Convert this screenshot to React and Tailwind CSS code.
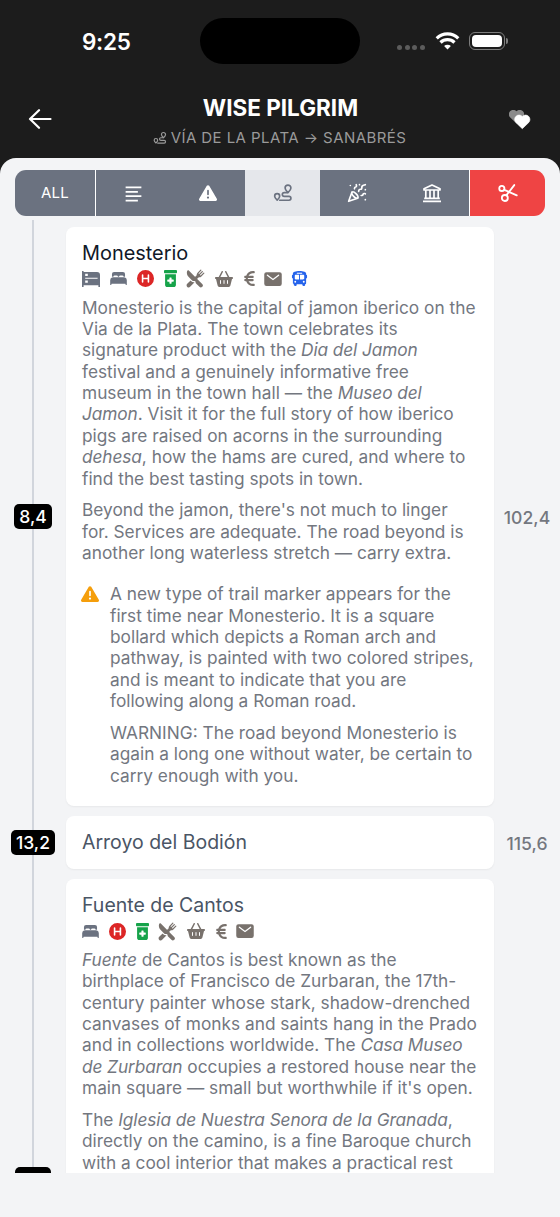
import clsx from "clsx";
import { FaBasketShopping, FaBus, FaCircleH, FaEuroSign, FaPrescriptionBottleMedical, FaTriangleExclamation } from "react-icons/fa6";
import { IoBed, IoMail, IoRestaurant } from "react-icons/io5";
import { LuPartyPopper } from "react-icons/lu";
import { RiAlignLeft } from "react-icons/ri";

/* ================= ICONS ================= */
function BackIcon({ className }) {
  return (
    <svg viewBox="0 0 24 20" className={className} fill="none" stroke="currentColor" strokeWidth="2.200" strokeLinecap="round" strokeLinejoin="round">
      <path d="M11 1.200 2 10l9 8.800M2 10h20.500" />
    </svg>
  );
}

function RouteIcon({ className }) {
  return (
    <svg viewBox="0 0 24 24" className={className} fill="none" stroke="currentColor" strokeWidth="2" strokeLinecap="round" strokeLinejoin="round">
      <path d="M18 11.500c-2-1.800-3.500-3.600-3.500-5.500a3.500 3.500 0 0 1 7 0c0 1.900-1.500 3.700-3.500 5.500z" />
      <path d="M5 20.500c-1.900-1.700-3-3.200-3-4.700a3 3 0 0 1 6 0c0 1.500-1.100 3-3 4.700z" />
      <path d="M17.500 11.500h-4a2.300 2.300 0 0 0 0 4.600h5.700a2.300 2.300 0 0 1 0 4.600H8" />
    </svg>
  );
}

function BankIcon({ className }) {
  return (
    <svg viewBox="0 0 20 20" className={className} fill="none" stroke="currentColor" strokeWidth="1.700" strokeLinejoin="round">
      <path d="M2 7V5.800L10 2l8 3.800V7z" />
      <path d="M3.800 7v8M8 7v8M12 7v8M16.200 7v8M2.200 15.300h15.600M1 18.300h18" />
    </svg>
  );
}

function ScissorsIcon({ className }) {
  return (
    <svg viewBox="0 0 24 24" className={className} fill="none" stroke="currentColor" strokeWidth="2.200" strokeLinecap="round">
      <circle cx="4.600" cy="6.500" r="3.100" />
      <circle cx="8.200" cy="18" r="3.600" />
      <path d="M19.500 2.500 10 14.800M7.500 8.200l15 6.600" />
    </svg>
  );
}

function BunkIcon({ className }) {
  return (
    <svg viewBox="0 0 18 16" className={className} fill="currentColor">
      <path fillRule="evenodd" d="M0 0h1.600v1H15a3 3 0 0 1 3 3v12h-1.600v-1.800H1.600V16H0zM3.200 2.800v2.200h2.600V2.800zM3.200 6.800v1h12.400v-1zM3.200 9.400v2.400h2.600V9.400z" />
    </svg>
  );
}

function WifiIcon({ className }) {
  return (
    <svg viewBox="0 0 24 18" className={className} fill="none" stroke="currentColor" strokeWidth="3.200">
      <path d="M1.200 6.400a15.300 15.300 0 0 1 21.600 0" />
      <path d="M5 10.500a10 10 0 0 1 14 0" />
      <path d="M12 17.500 8.600 14.100a4.800 4.800 0 0 1 6.800 0z" fill="currentColor" stroke="none" />
    </svg>
  );
}

function HeartsIcon({ className }) {
  const heart = "M8 14.500 1.500 8.200A4.300 4.300 0 0 1 8 2.300a4.300 4.300 0 0 1 6.500 5.900z";
  return (
    <svg viewBox="0 0 22 20" className={className}>
      <path d={heart} fill="#8a8a8a" transform="translate(-0.500 -1)" />
      <path d={heart} fill="#fff" stroke="#fff" strokeWidth="0.600" strokeLinejoin="round" transform="translate(5.300 4.200)" />
    </svg>
  );
}

/* ================= DATA ================= */
const SERVICES = {
  bunk: { width: "w-[18px]", icon: <BunkIcon className="h-4 w-[18px] text-[#6b7280]" /> },
  bed: { width: "w-[17px]", icon: <IoBed className="size-[19px] text-[#6b7280]" /> },
  hospital: { width: "w-[17px]", icon: <FaCircleH className="size-[17px] text-[#dc2626]" /> },
  pharmacy: { width: "w-3", icon: <FaPrescriptionBottleMedical className="h-[17px] w-[13px] text-[#16a34a]" preserveAspectRatio="none" /> },
  food: { width: "w-[18px]", icon: <IoRestaurant className="size-[19px] text-[#78716c]" /> },
  shop: { width: "w-5", icon: <FaBasketShopping className="size-[18px] text-[#78716c]" /> },
  atm: { width: "w-[10px]", icon: <FaEuroSign className="h-[17px] w-[11px] text-[#78716c]" /> },
  post: { width: "w-[17px]", icon: <IoMail className="size-5 text-[#78716c]" /> },
  bus: { width: "w-[17px]", icon: <FaBus className="size-[17px] text-[#2563eb]" /> },
};

const stops = [
  {
    name: "Monesterio",
    visited: true,
    step: "8,4",
    total: "102,4",
    services: ["bunk", "bed", "hospital", "pharmacy", "food", "shop", "atm", "post", "bus"],
    paragraphs: [
      [
        "Monesterio is the capital of jamon iberico on the",
        "Via de la Plata. The town celebrates its",
        <>signature product with the <i>Dia del Jamon</i></>,
        "festival and a genuinely informative free",
        <>museum in the town hall — the <i>Museo del</i></>,
        <><i>Jamon</i>. Visit it for the full story of how iberico</>,
        "pigs are raised on acorns in the surrounding",
        <><i>dehesa</i>, how the hams are cured, and where to</>,
        "find the best tasting spots in town.",
      ],
      [
        "Beyond the jamon, there's not much to linger",
        "for. Services are adequate. The road beyond is",
        "another long waterless stretch — carry extra.",
      ],
    ],
    warnings: [
      [
        "A new type of trail marker appears for the",
        "first time near Monesterio. It is a square",
        "bollard which depicts a Roman arch and",
        "pathway, is painted with two colored stripes,",
        "and is meant to indicate that you are",
        "following along a Roman road.",
      ],
      [
        "WARNING: The road beyond Monesterio is",
        "again a long one without water, be certain to",
        "carry enough with you.",
      ],
    ],
  },
  { name: "Arroyo del Bodión", step: "13,2", total: "115,6" },
  {
    name: "Fuente de Cantos",
    step: "7,4",
    tall: true,
    services: ["bed", "hospital", "pharmacy", "food", "shop", "atm", "post"],
    paragraphs: [
      [
        <><i>Fuente</i> de Cantos is best known as the</>,
        "birthplace of Francisco de Zurbaran, the 17th-",
        "century painter whose stark, shadow-drenched",
        "canvases of monks and saints hang in the Prado",
        <>and in collections worldwide. The <i>Casa Museo</i></>,
        <><i>de Zurbaran</i> occupies a restored house near the</>,
        "main square — small but worthwhile if it's open.",
      ],
      [
        <>The <i>Iglesia de Nuestra Senora de la Granada</i>,</>,
        "directly on the camino, is a fine Baroque church",
        "with a cool interior that makes a practical rest",
      ],
    ],
  },
];

/* ================= HEADER ================= */
function StatusBar() {
  return (
    <div className="grid grid-cols-[200px_160px_200px] pt-[18px]">
      <div className="flex items-center pt-[1px] pl-[82px] text-[22.500px] font-semibold tracking-[-0.300px]">9:25</div>
      <div className="h-[46px] rounded-full bg-black" />
      <div className="flex items-center pl-[37px]">
        <div className="mt-[13px] flex gap-[2.700px]">
          {[0, 1, 2, 3].map((i) => (
            <span key={i} className="size-[5px] rounded-full bg-[#5c5c5c]" />
          ))}
        </div>
        <WifiIcon className="ml-[10px] h-[18px] w-[25px]" />
        <div className="ml-[9px] h-[18px] w-9 rounded-[6px] border border-[#7d7d7d] p-[2px]">
          <div className="h-full rounded-[4px] bg-white" />
        </div>
        <span className="ml-[1px] h-[6px] w-[2px] rounded-r-full bg-[#7d7d7d]" />
      </div>
    </div>
  );
}

function Header() {
  return (
    <header className="h-[158px] bg-[#1c1c1c] text-white">
      <StatusBar />
      <div className="flex items-start justify-between pt-[29px] pl-[28px] pr-[29px]">
        <BackIcon className="mt-[15.500px] h-5 w-6" />
        <div className="flex flex-col items-center">
          <h1 className="text-[22.500px] leading-[29px] font-bold">WISE PILGRIM</h1>
          <div className="-ml-[2px] flex items-center gap-1 pt-[2px] text-[15px] leading-7 tracking-[0.430px] text-[#9a9a9a]">
            <RouteIcon className="size-[14px]" />
            VÍA DE LA PLATA → SANABRÉS
          </div>
        </div>
        <HeartsIcon className="mt-[16.500px] h-5 w-[22px]" />
      </div>
    </header>
  );
}

/* ================= FILTERS ================= */
const filters = [
  { id: "all", content: "ALL", className: "w-[80px] bg-[#6b7280]" },
  { id: "text", content: <RiAlignLeft className="size-[21px]" />, className: "flex-1 bg-[#6b7280] border-l border-white" },
  { id: "alerts", content: <FaTriangleExclamation className="size-[18px]" />, className: "flex-1 bg-[#6b7280]" },
  { id: "route", content: <RouteIcon className="size-5" />, className: "flex-1 bg-gray-200 text-[#6b7280]" },
  { id: "events", content: <LuPartyPopper className="size-5" />, className: "flex-1 bg-[#6b7280]" },
  { id: "culture", content: <BankIcon className="size-5" />, className: "flex-1 bg-[#6b7280]" },
  { id: "cut", content: <ScissorsIcon className="size-5" />, className: "flex-1 bg-[#ef4444] border-l border-white" },
];

function FilterBar() {
  return (
    <div className="mx-[15px] flex h-[46px] shrink-0 overflow-hidden rounded-[11px] text-[15px] tracking-[0.300px] text-white">
      {filters.map((f) => (
        <button key={f.id} className={clsx("flex items-center justify-center", f.className)}>
          {f.content}
        </button>
      ))}
    </div>
  );
}

/* ================= STOPS ================= */
function Paragraphs({ items }) {
  return (
    <div className="space-y-[10.400px] text-[17.300px] leading-[21.360px] whitespace-nowrap text-[#73777f] [&_i]:tracking-[-0.100px]">
      {items.map((lines, i) => (
        <p key={i}>
          {lines.map((line, j) => (
            <span key={j} className="block">{line}</span>
          ))}
        </p>
      ))}
    </div>
  );
}

function Stop({ stop }) {
  return (
    <div className="grid shrink-0 grid-cols-[66px_428px_66px] items-center">
      <div className="z-10 flex justify-center">
        <span className="rounded-[5px] bg-black px-[5.500px] text-[17.500px] leading-[25px] font-medium text-white">{stop.step}</span>
      </div>
      <div className={clsx("rounded-lg bg-white px-4 shadow-xs", stop.tall && "h-[600px]", stop.services ? "pt-3 pb-5" : "py-3")}>
        <h2 className={clsx("leading-[29px]", stop.visited ? "text-[19.900px] text-gray-900" : "text-[19.500px] text-gray-600")}>{stop.name}</h2>
        {stop.services && (
          <div className="flex h-5 items-center gap-[10px] pt-[2px]">
            {stop.services.map((s) => (
              <span key={s} className={clsx("flex justify-center *:shrink-0", SERVICES[s].width)}>{SERVICES[s].icon}</span>
            ))}
          </div>
        )}
        {stop.paragraphs && (
          <div className="pt-[9px]">
            <Paragraphs items={stop.paragraphs} />
          </div>
        )}
        {stop.warnings && (
          <div className="flex gap-[10px] pt-5">
            <FaTriangleExclamation className="mt-[2px] -ml-[1px] mr-[1px] size-[18px] text-[#f59e0b]" />
            <Paragraphs items={stop.warnings} />
          </div>
        )}
      </div>
      <div className="pt-[3px] text-center text-[17.600px] font-medium text-[#73777f]">{stop.total}</div>
    </div>
  );
}

export default function App() {
  return (
    <div className="h-[1217px] w-[560px] overflow-hidden bg-[#1c1c1c] font-['Inter',sans-serif]">
      <Header />
      <main className="flex h-[1059px] flex-col rounded-t-[16px] bg-gray-100 pt-[12.400px]">
        <FilterBar />
        <div className="relative mt-1 h-[953px] shrink-0 overflow-hidden">
          {/* trail line behind the distance badges */}
          <div className="absolute inset-y-0 left-8 w-[2px] bg-gray-300" />
          <div className="relative flex flex-col gap-[10px] pt-[6.300px]">
            {stops.map((stop) => (
              <Stop key={stop.name} stop={stop} />
            ))}
          </div>
        </div>
      </main>
    </div>
  );
}
